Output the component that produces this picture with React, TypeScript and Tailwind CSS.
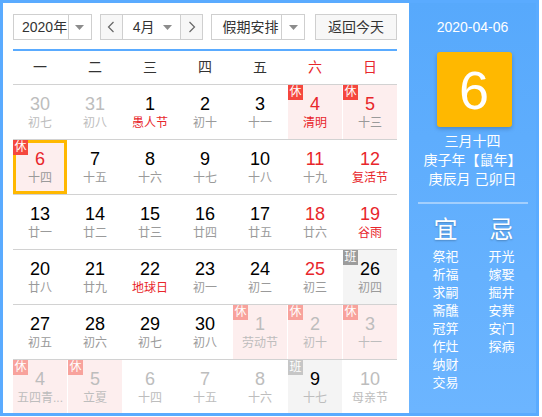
import React from "react";

type Day = {
  d: number;
  l: string;
  other?: boolean;
  fest?: boolean;
  tag?: "休" | "班";
  sel?: boolean;
};

const font = { fontFamily: '"Liberation Sans", "Noto Sans CJK SC", sans-serif' };

const weeks: Day[][] = [
  [
    { d: 30, l: "初七", other: true },
    { d: 31, l: "初八", other: true },
    { d: 1, l: "愚人节", fest: true },
    { d: 2, l: "初十" },
    { d: 3, l: "十一" },
    { d: 4, l: "清明", fest: true, tag: "休" },
    { d: 5, l: "十三", tag: "休" },
  ],
  [
    { d: 6, l: "十四", tag: "休", sel: true },
    { d: 7, l: "十五" },
    { d: 8, l: "十六" },
    { d: 9, l: "十七" },
    { d: 10, l: "十八" },
    { d: 11, l: "十九" },
    { d: 12, l: "复活节", fest: true },
  ],
  [
    { d: 13, l: "廿一" },
    { d: 14, l: "廿二" },
    { d: 15, l: "廿三" },
    { d: 16, l: "廿四" },
    { d: 17, l: "廿五" },
    { d: 18, l: "廿六" },
    { d: 19, l: "谷雨", fest: true },
  ],
  [
    { d: 20, l: "廿八" },
    { d: 21, l: "廿九" },
    { d: 22, l: "地球日", fest: true },
    { d: 23, l: "初一" },
    { d: 24, l: "初二" },
    { d: 25, l: "初三" },
    { d: 26, l: "初四", tag: "班" },
  ],
  [
    { d: 27, l: "初五" },
    { d: 28, l: "初六" },
    { d: 29, l: "初七" },
    { d: 30, l: "初八" },
    { d: 1, l: "劳动节", other: true, tag: "休" },
    { d: 2, l: "初十", other: true, tag: "休" },
    { d: 3, l: "十一", other: true, tag: "休" },
  ],
  [
    { d: 4, l: "五四青...", other: true, tag: "休" },
    { d: 5, l: "立夏", other: true, tag: "休" },
    { d: 6, l: "十四", other: true },
    { d: 7, l: "十五", other: true },
    { d: 8, l: "十六", other: true },
    { d: 9, l: "十七", other: true, tag: "班" },
    { d: 10, l: "母亲节", other: true },
  ],
];

const yi = ["祭祀", "祈福", "求嗣", "斋醮", "冠笄", "作灶", "纳财", "交易"];
const ji = ["开光", "嫁娶", "掘井", "安葬", "安门", "探病"];

function Caret() {
  return (
    <svg width="9" height="5" viewBox="0 0 9 5">
      <path d="M0 0h9L4.5 5z" fill="#8c8c8c" />
    </svg>
  );
}

function Cell({ day, col }: { day: Day; col: number }) {
  const weekend = col >= 5;
  let numColor = "text-black";
  if (day.tag === "班") numColor = "text-black";
  else if (day.other) numColor = "text-[#bdbdbd]";
  else if (weekend || day.tag === "休") numColor = "text-[#e8262b]";

  const lunarColor = day.other ? "text-[#bdbdbd]" : day.fest ? "text-[#e8262b]" : "text-[#9a9a9a]";
  const bg = day.tag === "休" ? "bg-[#fdeeee]" : day.tag === "班" ? "bg-[#f4f4f4]" : "";

  const badgeColor =
    day.tag === "休"
      ? day.other
        ? "bg-[#f8a29c]"
        : "bg-[#f5473e]"
      : day.other
        ? "bg-[#c6c6c6]"
        : "bg-[#9c9c9c]";

  return (
    <div className={`relative h-[54px] flex flex-col items-center pt-[9px] ${bg}`}>
      {day.sel && <div className="absolute inset-0 border-[3px] border-[#ffb800]" />}
      {day.tag && (
        <div
          className={`absolute top-0 left-0 w-[15px] h-[15px] text-[12px] leading-[15px] text-center text-white ${badgeColor}`}
        >
          {day.tag}
        </div>
      )}
      <div className={`text-[18px] leading-[21px] ${numColor}`}>{day.d}</div>
      <div className={`whitespace-nowrap text-center text-[12px] leading-[17px] ${lunarColor}`}>{day.l}</div>
    </div>
  );
}

export default function App() {
  return (
    <div style={font} className="w-[539px] h-[416px] border-[3px] border-[#5aabff] flex bg-white overflow-hidden">
      {/* Calendar */}
      <div className="w-[406px] pl-[10px] pr-[12px] pt-[11px]">
        <div className="flex h-[26px] text-[14px] text-[#333]">
          <div className="w-[79px] flex border border-[#cfcfcf]">
            <div className="flex-1 flex items-center pl-[8px] whitespace-nowrap">2020年</div>
            <div className="w-[23px] border-l border-[#cfcfcf] flex items-center justify-center">
              <Caret />
            </div>
          </div>

          <div className="ml-[8px] w-[104px] flex border border-[#cfcfcf]">
            <div className="w-[22px] bg-[#f7f7f7] border-r border-[#cfcfcf] flex items-center justify-center">
              <svg width="8" height="12" viewBox="0 0 8 12">
                <path d="M6.5 1L1.5 6l5 5" fill="none" stroke="#666" strokeWidth="1.2" />
              </svg>
            </div>
            <div className="flex-1 flex items-center justify-between pl-[10px] pr-[8px] whitespace-nowrap">
              <span>4月</span>
              <Caret />
            </div>
            <div className="w-[22px] bg-[#f7f7f7] border-l border-[#cfcfcf] flex items-center justify-center">
              <svg width="8" height="12" viewBox="0 0 8 12">
                <path d="M1.5 1l5 5-5 5" fill="none" stroke="#666" strokeWidth="1.2" />
              </svg>
            </div>
          </div>

          <div className="ml-[8px] w-[94px] flex border border-[#cfcfcf]">
            <div className="flex-1 flex items-center pl-[10px] whitespace-nowrap">假期安排</div>
            <div className="w-[23px] border-l border-[#cfcfcf] flex items-center justify-center">
              <Caret />
            </div>
          </div>

          <button className="ml-[10px] w-[82px] border border-[#cfcfcf] bg-[#f7f7f7] text-[#333]">返回今天</button>
        </div>

        <div className="mt-[9px] h-[2px] bg-[#5aabff]" />

        <div className="grid grid-cols-7 gap-x-px h-[33px] items-center text-[14px] text-[#333] text-center">
          {["一", "二", "三", "四", "五", "六", "日"].map((w, i) => (
            <div key={w} className={i >= 5 ? "text-[#e8262b]" : ""}>
              {w}
            </div>
          ))}
        </div>

        {weeks.map((row, r) => (
          <div key={r} className="grid grid-cols-7 gap-x-px border-t border-[#d2d2d2]">
            {row.map((day, c) => (
              <Cell key={c} day={day} col={c} />
            ))}
          </div>
        ))}
      </div>

      {/* Side panel */}
      <div className="flex-1 bg-linear-to-b from-[#57a9fc] to-[#6cb5ff] text-white flex flex-col items-center pt-[14px]">
        <div className="text-[14px] leading-[20px]">2020-04-06</div>
        <div className="mt-[15px] w-[75px] h-[75px] rounded-[3px] bg-[#ffb800] shadow-[0_2px_4px_rgba(0,0,0,0.2)] flex items-center justify-center text-[54px] leading-none ml-[3px]">
          6
        </div>
        <div className="mt-[5px] text-[14px] leading-[19px] text-center">
          <div>三月十四</div>
          <div>庚子年【鼠年】</div>
          <div>庚辰月 己卯日</div>
        </div>
        <div className="mt-[13px] h-[2px] w-[110px] bg-[#a3cffd]" />
        <div className="mt-[11px] flex gap-[16px] ml-[2px]">
          <div className="w-[40px] flex flex-col items-center">
            <div className="text-[24px] leading-[30px] [text-shadow:0_1px_2px_rgba(0,0,0,0.25)]">宜</div>
            <div className="mt-[3px] text-[13px] leading-[18px] text-center">
              {yi.map((t) => (
                <div key={t}>{t}</div>
              ))}
            </div>
          </div>
          <div className="w-[40px] flex flex-col items-center">
            <div className="text-[24px] leading-[30px] [text-shadow:0_1px_2px_rgba(0,0,0,0.25)]">忌</div>
            <div className="mt-[3px] text-[13px] leading-[18px] text-center">
              {ji.map((t) => (
                <div key={t}>{t}</div>
              ))}
            </div>
          </div>
        </div>
      </div>
    </div>
  );
}
